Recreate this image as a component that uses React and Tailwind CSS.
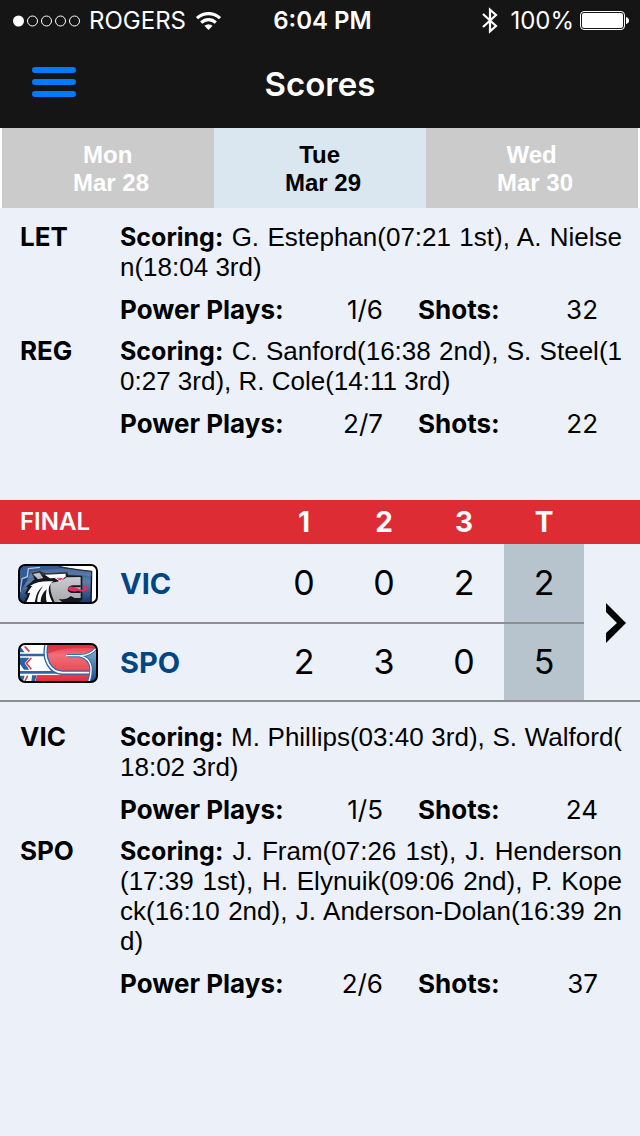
const days = [
  { day: 'Mon', date: 'Mar 28' },
  { day: 'Tue', date: 'Mar 29', active: true },
  { day: 'Wed', date: 'Mar 30' },
]

const previousGame = [
  { team: 'LET', scoring: 'G. Estephan(07:21 1st), A. Nielsen(18:04 3rd)', powerPlays: '1/6', shots: 32 },
  { team: 'REG', scoring: 'C. Sanford(16:38 2nd), S. Steel(10:27 3rd), R. Cole(14:11 3rd)', powerPlays: '2/7', shots: 22 },
]

// zero-width space lets a goal time wrap after its bracket
const finalGame = [
  { team: 'VIC', scoring: 'M. Phillips(03:40 3rd), S. Walford(\u200b18:02 3rd)', powerPlays: '1/5', shots: 24 },
  {
    team: 'SPO',
    scoring:
      'J. Fram(07:26 1st), J. Henderson(17:39 1st), H. Elynuik(09:06 2nd), P. Kopeck(16:10 2nd), J. Anderson-Dolan(16:39 2nd)',
    powerPlays: '2/6',
    shots: 37,
  },
]

export default function App() {
  return (
    <div className="min-h-screen bg-[#ecf1f9] font-['Inter',sans-serif] text-black">
      <header className="bg-[#151515] text-white">
        <StatusBar />
        <NavBar />
      </header>
      <DayTabs />
      <main>
        <GameSummary teams={previousGame} className="pt-3.5 pb-[61px]" />
        <Scoreboard />
        <GameSummary teams={finalGame} className="pt-5" />
      </main>
    </div>
  )
}

function StatusBar() {
  return (
    <div className="grid h-10 grid-cols-[1fr_auto_1fr] items-center pt-px pr-[11px] pl-3 text-2xl">
      <div className="flex items-center gap-2">
        <SignalDots />
        <span>ROGERS</span>
        <WifiIcon />
      </div>
      <span className="pl-1 font-semibold">6:04 PM</span>
      <div className="flex items-center justify-end gap-1.5">
        <BluetoothIcon />
        <span className="ml-1.5">100%</span>
        <BatteryIcon />
      </div>
    </div>
  )
}

function NavBar() {
  return (
    <div className="grid h-22 grid-cols-[1fr_auto_1fr] items-center px-8">
      <button type="button" aria-label="Menu" className="mb-1 flex w-11 flex-col gap-1.5">
        <span className="h-1.5 w-full rounded-full bg-[#007aff]" />
        <span className="h-1.5 w-full rounded-full bg-[#007aff]" />
        <span className="h-1.5 w-full rounded-full bg-[#007aff]" />
      </button>
      <h1 className="text-[33px] leading-10 font-semibold">Scores</h1>
    </div>
  )
}

function DayTabs() {
  return (
    <nav className="grid h-20 grid-cols-3 bg-white px-0.5">
      {days.map(({ day, date, active }) => (
        <button
          key={date}
          type="button"
          aria-pressed={!!active}
          className={`pt-0.5 pl-1.5 font-['Liberation_Sans',Arial,sans-serif] text-2xl leading-7 font-bold whitespace-pre ${
            active ? 'bg-[#dae6f0] text-black' : 'bg-[#cbcbcb] text-white'
          }`}
        >
          {`${day} \n${date}`}
        </button>
      ))}
    </nav>
  )
}

function GameSummary({ teams, className }) {
  return (
    <section className={`flex flex-col gap-[11px] pr-[18px] pl-5 text-[26px] leading-[30px] ${className}`}>
      {teams.map(({ team, scoring, powerPlays, shots }) => (
        <article key={team} className="grid grid-cols-[100px_1fr]">
          <h2 className="font-bold">{team}</h2>
          <div>
            <p className="text-justify font-['Liberation_Sans',Arial,sans-serif] break-all">
              <b className="font-['Inter',sans-serif] text-[25px] font-bold">Scoring:</b> {scoring}
            </p>
            <dl className="mt-[13px] grid grid-cols-[1fr_100px_120px_85px]">
              <dt className="font-bold">Power Plays:</dt>
              <dd className="pr-[34px] text-right">{powerPlays}</dd>
              <dt className="pl-px font-bold">Shots:</dt>
              <dd className="pr-6 text-right">{shots}</dd>
            </dl>
          </div>
        </article>
      ))}
    </section>
  )
}

function Scoreboard() {
  return (
    <table className="w-full table-fixed border-separate border-spacing-0">
      <colgroup>
        <col />
        <col className="w-20" />
        <col className="w-20" />
        <col className="w-20" />
        <col className="w-20" />
        <col className="w-14" />
      </colgroup>
      <thead>
        <tr className="h-11 bg-[#dd2c34] text-white">
          <th scope="col" className="pl-5 text-left text-2xl font-semibold">FINAL</th>
          <th scope="col" className="text-[28px] leading-8 font-bold">1</th>
          <th scope="col" className="text-[28px] leading-8 font-bold">2</th>
          <th scope="col" className="text-[28px] leading-8 font-bold">3</th>
          <th scope="col" className="text-[28px] leading-8 font-bold">T</th>
          <td />
        </tr>
      </thead>
      <tbody>
        <ScoreRow team="VIC" logo={<RoyalsLogo />} periods={[0, 0, 2]} total={2} className="h-20">
          <td rowSpan={2} className="border-b-2 border-[#8c8e91] p-0">
            <button type="button" aria-label="Game details" className="flex w-full pt-0.5 pl-[22px]">
              <svg className="h-10 w-5" viewBox="0 0 20 40" aria-hidden="true">
                <path d="M0 0 L20 20 L0 40 V30 L11 20 L0 9 Z" />
              </svg>
            </button>
          </td>
        </ScoreRow>
        <ScoreRow team="SPO" logo={<ChiefsLogo />} periods={[2, 3, 0]} total={5} className="h-[78px]" />
      </tbody>
    </table>
  )
}

function ScoreRow({ team, logo, periods, total, className, children }) {
  return (
    <tr className={`text-center text-[34px] leading-10 ${className}`}>
      <th scope="row" className="border-b-2 border-[#8c8e91] p-0 pl-[18px]">
        <div className="flex items-center gap-[22px] pt-0.5">
          {logo}
          <span className="text-[29px] font-bold text-[#004685]">{team}</span>
        </div>
      </th>
      {periods.map((goals, i) => (
        <td key={i} className="border-b-2 border-[#8c8e91] p-0">{goals}</td>
      ))}
      <td className="border-b-2 border-[#8c8e91] bg-[#b8c4cd] p-0">{total}</td>
      {children}
    </tr>
  )
}

function SignalDots() {
  return (
    <svg className="h-3 w-[69px]" viewBox="0 0 69 12" fill="none" stroke="#fff" aria-hidden="true">
      <circle cx="6.5" cy="6" r="5.5" fill="#fff" stroke="none" />
      <circle cx="20.5" cy="6" r="5" />
      <circle cx="34.5" cy="6" r="5" />
      <circle cx="48.5" cy="6" r="5" />
      <circle cx="62.5" cy="6" r="5" />
    </svg>
  )
}

function WifiIcon() {
  return (
    <svg className="ml-0.5 h-[18px] w-[25px]" viewBox="0 0 25 18" fill="none" stroke="#fff" aria-hidden="true">
      <path d="M1 6.2 C7.5 0 17.5 0 24 6.2" strokeWidth="3.2" />
      <path d="M5.2 10.6 C9.5 6.6 15.5 6.6 19.8 10.6" strokeWidth="3.2" />
      <path d="M12.5 18 L8.4 13.8 Q12.5 10.6 16.6 13.8 Z" fill="#fff" stroke="none" />
    </svg>
  )
}

function BluetoothIcon() {
  return (
    <svg className="h-[27px] w-4" viewBox="0 0 16 27" fill="none" stroke="#fff" strokeWidth="2.2" aria-hidden="true">
      <path d="M1 7 L14 19 L8 24.3 V2.7 L14 8 L1 20" />
    </svg>
  )
}

function BatteryIcon() {
  return (
    <svg className="h-[19px] w-[49px]" viewBox="0 0 49 19" aria-hidden="true">
      <rect x=".5" y=".5" width="44" height="18" rx="3.5" fill="none" stroke="#fff" />
      <rect x="2" y="2" width="41" height="15" rx="2" fill="#fff" />
      <path d="M46 6 Q49 7 49 9.5 T46 13 Z" fill="#fff" />
    </svg>
  )
}

function RoyalsLogo() {
  return (
    <svg className="h-10 w-20" viewBox="0 0 240 120" aria-hidden="true">
      <defs>
        <linearGradient id="royals-blue" x1="0" y1="0" x2="0" y2="1">
          <stop offset="0" stopColor="#1f4a88" />
          <stop offset=".45" stopColor="#5f7eaa" />
          <stop offset="1" stopColor="#12346a" />
        </linearGradient>
        <linearGradient id="royals-face" x1="0" y1="0" x2="0" y2="1">
          <stop offset="0" stopColor="#c9cbd0" />
          <stop offset="1" stopColor="#a6a8ac" />
        </linearGradient>
        <clipPath id="royals-clip">
          <rect x="3" y="3" width="234" height="114" rx="18" />
        </clipPath>
      </defs>
      <g clipPath="url(#royals-clip)">
        <rect width="240" height="120" fill="url(#royals-blue)" />
        <path d="M0 0 H240 V24 L140 12 L40 22 L28 48 L0 96 Z" fill="#1c4582" />
        <path d="M6 84 L12 44 L28 38 L31 14 L66 10" fill="none" stroke="#a9bcd6" strokeWidth="4" />
        <path d="M124 6 H240 V120 H220 L221 22 C184 17 154 13 124 6 Z" fill="#fff" />
        <path d="M122 8 C160 16 192 19 221 22 L219 120" fill="none" stroke="#0c1018" strokeWidth="4" />
        {/* outline behind the head */}
        <path
          d="M40 26 L66 21 L82 28 L148 24 L150 34 L193 35 V106 L178 118 H16 L28 92 L20 90 L30 70 L24 68 L50 46 Z"
          fill="#14171d"
        />
        <path
          d="M98 58 C112 52 124 56 146 40 L188 39 V102 H170 L158 96 C148 106 134 108 122 104 C126 110 134 114 140 118 H112 C102 98 94 78 98 58 Z"
          fill="url(#royals-face)"
        />
        {/* mane */}
        <path
          d="M24 116 C31 102 35 95 36 86 L28 88 C34 77 38 72 43 67 L36 66 C55 53 77 50 106 52 C86 65 90 90 104 116 H87 C82 103 84 88 86 76 C72 88 68 102 68 116 H58 C57 95 65 80 76 66 C56 80 54 98 50 116 Z"
          fill="#fff"
        />
        <path d="M45 30 L64 26 L76 42 L60 46 Z" fill="#b9bbc0" />
        <path d="M80 32 L143 29 V40 L96 43 Z" fill="#fff" />
        <path d="M112 42 L138 40 L127 52 Z" fill="#dc315d" stroke="#fff" strokeWidth="3" />
        {/* mouth and tongue */}
        <path d="M188 64 H164 C146 66 144 84 160 87 H188 V80 H166 V70 H188 Z" fill="#15181e" />
        <path d="M152 68 C162 66 170 69 178 73 C188 79 198 78 200 72 L192 71 L198 64 C210 66 212 78 202 82 C194 85 186 81 178 81 C168 84 156 83 150 76 Z" fill="#da315f" />
      </g>
      <path d="M6 48 V22 Q6 6 22 6 H218 Q234 6 234 22 V40 C150 24 82 28 6 48 Z" fill="#fff" opacity=".12" />
      <rect x="3" y="3" width="234" height="114" rx="18" fill="none" stroke="#000" strokeWidth="6" />
    </svg>
  )
}

function ChiefsLogo() {
  return (
    <svg className="h-10 w-20" viewBox="0 0 240 120" aria-hidden="true">
      <defs>
        <linearGradient id="chiefs-red" x1="0" y1="0" x2="0" y2="1">
          <stop offset="0" stopColor="#e0323f" />
          <stop offset=".3" stopColor="#f0707a" />
          <stop offset=".7" stopColor="#ea4a55" />
          <stop offset="1" stopColor="#df2635" />
        </linearGradient>
        <linearGradient id="chiefs-blue" x1="0" y1="0" x2="0" y2="1">
          <stop offset="0" stopColor="#8fb2d6" />
          <stop offset="1" stopColor="#0c4687" />
        </linearGradient>
        <clipPath id="chiefs-clip">
          <rect x="3" y="3" width="234" height="114" rx="18" />
        </clipPath>
      </defs>
      <g clipPath="url(#chiefs-clip)">
        <rect width="240" height="120" fill="#fff" />
        {/* feather stripes */}
        <path d="M5 36 H84 M5 88 H120" fill="none" stroke="#2868a8" strokeWidth="8" />
        <path d="M6 10 L20 28 H6 Z M6 44 H34 L20 61 L34 80 H18 L6 64 Z M6 98 H20 L14 117 H6 Z M42 97 H56 L50 117 H40 Z" fill="#2464a5" />
        <path d="M20 10 L34 26 M40 45 L25 61 L40 79 M29 98 L21 114" fill="none" stroke="#e93942" strokeWidth="5" />
        <path d="M88 0 H240 V120 H50 L57 96 H132 C98 90 76 58 88 0 Z" fill="url(#chiefs-red)" />
        <path d="M240 14 C222 32 212 38 196 40 C214 50 220 66 219 84 C219 100 216 110 212 120 H240 Z" fill="url(#chiefs-blue)" />
        {/* outline of the S */}
        <path d="M86 2 C74 52 98 88 134 89 H216" fill="none" stroke="#2565a8" strokeWidth="13" />
        <path d="M86 2 C74 52 98 88 134 89 H216" fill="none" stroke="#fff" strokeWidth="5" />
        <path d="M236 14 C220 34 204 39 184 38 H148 M184 38 C210 44 220 60 219 82 C219 98 216 108 212 118" fill="none" stroke="#3270ac" strokeWidth="10" />
        <path d="M236 14 C220 34 204 39 184 38 H144 M184 38 C210 44 220 60 219 82 C219 98 216 108 212 118" fill="none" stroke="#fff" strokeWidth="4" />
        <path d="M92 6 H234 V18 C184 10 128 16 90 32 Z" fill="#d92735" opacity=".6" />
      </g>
      <rect x="3" y="3" width="234" height="114" rx="18" fill="none" stroke="#000" strokeWidth="6" />
    </svg>
  )
}
